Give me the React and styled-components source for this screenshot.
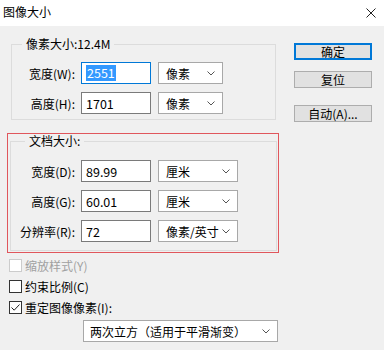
import styled, { createGlobalStyle } from 'styled-components';

const GlobalStyle = createGlobalStyle`
  html, body {
    margin: 0;
    padding: 0;
    background: #f0f0f0;
  }
  body {
    font-family: "Noto Sans CJK SC", "Noto Sans", sans-serif;
    font-size: 12px;
    color: #000;
  }
`;

const Window = styled.div`
  width: 384px;
  height: 350px;
  background: #f0f0f0;
  overflow: hidden;
`;

const TitleBar = styled.div`
  height: 26px;
  background: #fff;
  display: flex;
  align-items: center;
  justify-content: space-between;
  padding: 0 8px 0 3px;
  box-sizing: border-box;
`;

const Title = styled.span`
  font-size: 12px;
  line-height: 14px;
  margin-top: -2px;
`;

const Body = styled.div`
  display: flex;
  align-items: flex-start;
  gap: 15px;
  padding-left: 7px;
`;

const LeftCol = styled.div`
  width: 272px;
  padding-top: 11px;
  display: flex;
  flex-direction: column;
`;

const Group = styled.fieldset`
  margin: 0 0 0 ${({ $inset }) => $inset}px;
  width: ${({ $width }) => $width}px;
  box-sizing: border-box;
  border: 1px solid #dcdcdc;
  padding: ${({ $pt }) => $pt}px 0 ${({ $pb }) => $pb}px 0;
  display: flex;
  flex-direction: column;
  gap: 8px;
  min-width: 0;
`;

const Legend = styled.legend`
  margin-left: ${({ $left }) => $left}px;
  padding: 0 4px;
  font-size: 12px;
  line-height: 14px;
`;

const Highlight = styled.div`
  margin-top: 13px;
  border: 1px solid #e0565c;
  padding: 0 1px 1px 2px;
`;

const Row = styled.div`
  display: flex;
  align-items: center;
  height: 22px;
`;

const Label = styled.span`
  width: ${({ $w }) => $w}px;
  text-align: right;
  padding-right: 6px;
  box-sizing: border-box;
  white-space: nowrap;
`;

const Input = styled.div`
  width: 70px;
  height: 22px;
  box-sizing: border-box;
  border: 1px solid ${({ $focus }) => ($focus ? '#0078d7' : '#7a7a7a')};
  background: #fff;
  display: flex;
  align-items: center;
  padding-left: 4px;
  font-size: 12.5px;
`;

const Selected = styled.span`
  background: #3399ff;
  color: #fff;
  padding: 0 1px;
  line-height: 16px;
`;

const Select = styled.div`
  width: ${({ $w }) => $w}px;
  height: 22px;
  margin-left: ${({ $ml }) => $ml}px;
  box-sizing: border-box;
  border: 1px solid #a8a8a8;
  background: #fff;
  display: flex;
  align-items: center;
  justify-content: space-between;
  padding: 0 7px 0 ${({ $pl }) => $pl || 7}px;
  white-space: nowrap;
  overflow: hidden;
`;

const Chevron = () => (
  <svg width="8" height="5" viewBox="0 0 8 5" style={{ flexShrink: 0 }}>
    <path d="M0.5 0.5 L4 4 L7.5 0.5" fill="none" stroke="#555" strokeWidth="1" />
  </svg>
);

const Checks = styled.div`
  margin: 2px 0 0 2px;
  display: flex;
  flex-direction: column;
`;

const CheckRow = styled.div`
  display: flex;
  align-items: center;
  height: 21px;
  gap: 3px;
  color: ${({ $disabled }) => ($disabled ? '#a0a0a0' : '#000')};
`;

const Box = styled.span`
  width: 13px;
  height: 13px;
  box-sizing: border-box;
  border: 1px solid ${({ $disabled }) => ($disabled ? '#cccccc' : '#333')};
  background: #fff;
  display: flex;
  align-items: center;
  justify-content: center;
`;

const Resample = styled(Select)`
  margin-top: 2px;
`;

const RightCol = styled.div`
  padding-top: 17px;
  display: flex;
  flex-direction: column;
`;

const Button = styled.div`
  width: 78px;
  height: 17px;
  box-sizing: border-box;
  margin-top: ${({ $mt }) => $mt || 0}px;
  border: ${({ $default }) => ($default ? '2px solid #0078d7' : '1px solid #adadad')};
  background: #e1e1e1;
  display: flex;
  align-items: center;
  justify-content: center;
  font-size: 12px;
  line-height: 14px;
`;

const Field = ({ label, labelW, value, focus, unit, selW }) => (
  <Row>
    <Label $w={labelW}>{label}</Label>
    <Input $focus={focus}>{focus ? <Selected>{value}</Selected> : value}</Input>
    <Select $w={selW} $ml={7}>
      <span>{unit}</span>
      <Chevron />
    </Select>
  </Row>
);

export default function App() {
  return (
    <>
      <GlobalStyle />
      <Window>
        <TitleBar>
          <Title>图像大小</Title>
          <svg width="10" height="10" viewBox="0 0 10 10">
            <path d="M0.5 0.5 L9.5 9.5 M9.5 0.5 L0.5 9.5" stroke="#222" strokeWidth="1" />
          </svg>
        </TitleBar>
        <Body>
          <LeftCol>
            <Group $inset={4} $width={265} $pt={11} $pb={5}>
              <Legend $left={10}>像素大小:12.4M</Legend>
              <Field label="宽度(W):" labelW={69} value="2551" focus unit="像素" selW={65} />
              <Field label="高度(H):" labelW={69} value="1701" unit="像素" selW={65} />
            </Group>
            <Highlight>
              <Group $inset={0} $width={267} $pt={12} $pb={8}>
                <Legend $left={14}>文档大小:</Legend>
                <Field label="宽度(D):" labelW={70} value="89.99" unit="厘米" selW={80} />
                <Field label="高度(G):" labelW={70} value="60.01" unit="厘米" selW={80} />
                <Field label="分辨率(R):" labelW={70} value="72" unit="像素/英寸" selW={80} />
              </Group>
            </Highlight>
            <Checks>
              <CheckRow $disabled>
                <Box $disabled />
                <span>缩放样式(Y)</span>
              </CheckRow>
              <CheckRow>
                <Box />
                <span>约束比例(C)</span>
              </CheckRow>
              <CheckRow>
                <Box>
                  <svg width="11" height="11" viewBox="0 0 11 11">
                    <path d="M1.5 5.5 L4.2 8.2 L9.5 2.5" fill="none" stroke="#222" strokeWidth="1" />
                  </svg>
                </Box>
                <span>重定图像像素(I):</span>
              </CheckRow>
            </Checks>
            <Resample $w={195} $ml={76} $pl={6}>
              <span>两次立方（适用于平滑渐变）</span>
              <Chevron />
            </Resample>
          </LeftCol>
          <RightCol>
            <Button $default>确定</Button>
            <Button $mt={11}>复位</Button>
            <Button $mt={17}>自动(A)...</Button>
          </RightCol>
        </Body>
      </Window>
    </>
  );
}
